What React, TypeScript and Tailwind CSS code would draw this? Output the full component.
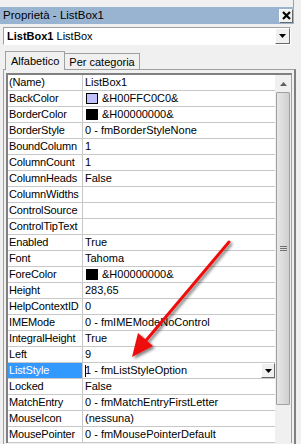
import React from 'react';

type Row = { name: string; value: string; swatch?: string };

const rows: Row[] = [
  { name: '(Name)', value: 'ListBox1' },
  { name: 'BackColor', value: '&H00FFC0C0&', swatch: '#c0c0ff' },
  { name: 'BorderColor', value: '&H00000000&', swatch: '#000000' },
  { name: 'BorderStyle', value: '0 - fmBorderStyleNone' },
  { name: 'BoundColumn', value: '1' },
  { name: 'ColumnCount', value: '1' },
  { name: 'ColumnHeads', value: 'False' },
  { name: 'ColumnWidths', value: '' },
  { name: 'ControlSource', value: '' },
  { name: 'ControlTipText', value: '' },
  { name: 'Enabled', value: 'True' },
  { name: 'Font', value: 'Tahoma' },
  { name: 'ForeColor', value: '&H00000000&', swatch: '#000000' },
  { name: 'Height', value: '283,65' },
  { name: 'HelpContextID', value: '0' },
  { name: 'IMEMode', value: '0 - fmIMEModeNoControl' },
  { name: 'IntegralHeight', value: 'True' },
  { name: 'Left', value: '9' },
  { name: 'ListStyle', value: '1 - fmListStyleOption' },
  { name: 'Locked', value: 'False' },
  { name: 'MatchEntry', value: '0 - fmMatchEntryFirstLetter' },
  { name: 'MouseIcon', value: '(nessuna)' },
  { name: 'MousePointer', value: '0 - fmMousePointerDefault' },
];

function DropButton({ className }: { className: string }) {
  return (
    <div className={`flex items-center justify-center bg-[#f0f0f0] border border-t-white border-l-white border-r-[#696969] border-b-[#696969] ${className}`}>
      <svg width="7" height="4" viewBox="0 0 7 4">
        <path d="M0 0h7L3.5 4z" fill="#000" />
      </svg>
    </div>
  );
}

function PropRow({ row }: { row: Row }) {
  const selected = row.name === 'ListStyle';
  return (
    <div className="flex h-[16px] border-b border-[#c8c8c8] bg-white">
      <div
        className={`w-[75px] shrink-0 border-r border-[#c8c8c8] pl-[1px] leading-[15px] tracking-[-0.15px] whitespace-nowrap overflow-hidden ${
          selected ? 'bg-[#3399ff] text-white' : ''
        }`}
      >
        {row.name}
      </div>
      <div className="flex-1 flex items-center pl-[2px] whitespace-nowrap overflow-hidden relative">
        {row.swatch && (
          <span className="w-[12px] h-[11px] border border-black mr-[4px] ml-[1px] shrink-0" style={{ backgroundColor: row.swatch }} />
        )}
        {selected && <span className="w-px h-[12px] bg-black -mr-[1px]" />}
        <span className="leading-[15px]">{row.value}</span>
        {selected && <DropButton className="absolute right-0 top-0 w-[14px] h-[15px]" />}
      </div>
    </div>
  );
}

export default function App() {
  return (
    <div
      className="w-[301px] h-[444px] bg-[#f0f0f0] relative overflow-hidden text-[11px] text-black"
      style={{ fontFamily: '"Liberation Sans", Arial, sans-serif' }}
    >
      <div className="h-[7px] border-r border-[#a0a0a0] w-[294px]" />

      <div className="flex h-[17px] items-center bg-[#99b4d1] mr-[7px] pl-[3px] pr-[1px]">
        <span className="flex-1 text-[11.5px]">Proprietà - ListBox1</span>
        <div className="w-[14px] h-[14px] bg-[#f0f0f0] border border-t-white border-l-white border-r-[#696969] border-b-[#696969] flex items-center justify-center">
          <svg width="9" height="9" viewBox="0 0 9 9">
            <path d="M1 1l7 7M8 1L1 8" stroke="#000" strokeWidth="2.2" />
          </svg>
        </div>
      </div>

      <div className="px-[3px] pt-[3px] mr-[7px]">
        <div className="h-[18px] flex bg-white border border-t-[#a0a0a0] border-l-[#a0a0a0] border-r-white border-b-white items-center pl-[3px]">
          <span className="flex-1 whitespace-nowrap">
            <b>ListBox1</b> ListBox
          </span>
          <DropButton className="w-[15px] h-[16px]" />
        </div>
      </div>

      <div className="flex pl-[5px] pt-[4px] h-[24px] items-end">
        <div className="h-[19px] px-[5px] border border-b-0 border-[#a0a0a0] bg-[#f0f0f0] leading-[18px] relative -mb-px z-10">
          Alfabetico
        </div>
        <div className="h-[16px] px-[4px] border border-l-0 border-b-0 border-[#a0a0a0] leading-[16px]">Per categoria</div>
      </div>

      <div className="mx-[3px] mr-[5px] border-l border-t border-[#a0a0a0] border-r-2 border-r-[#808080] pl-[2px] pt-[3px] pr-[2px] h-[400px]">
        <div className="flex border-t-2 border-l-2 border-[#808080] border-r border-r-[#a0a0a0]">
          <div className="flex-1">
            {rows.map((r) => (
              <PropRow key={r.name} row={r} />
            ))}
          </div>
          <div className="w-[16px] bg-[#f0f0f0] flex flex-col">
            <div className="h-[17px] flex items-center justify-center">
              <svg width="7" height="4" viewBox="0 0 7 4">
                <path d="M3.5 0L7 4H0z" fill="#606060" />
              </svg>
            </div>
            <div className="mx-[1px] h-[313px] rounded-[1px] border border-[#a0a0a0] bg-gradient-to-r from-[#e6e6e6] via-[#dcdcdc] to-[#cfcfcf] flex items-center justify-center">
              <svg width="7" height="6" viewBox="0 0 7 6">
                <path d="M0 .5h7M0 2.5h7M0 4.5h7" stroke="#707070" />
              </svg>
            </div>
          </div>
        </div>
      </div>

      <svg className="absolute left-0 top-0 pointer-events-none" width="301" height="444" viewBox="0 0 301 444">
        <defs>
          <filter id="sh" x="-20%" y="-20%" width="140%" height="140%">
            <feGaussianBlur in="SourceAlpha" stdDeviation="1.5" />
            <feOffset dx="2" dy="2" />
            <feComponentTransfer>
              <feFuncA type="linear" slope="0.5" />
            </feComponentTransfer>
            <feMerge>
              <feMergeNode />
              <feMergeNode in="SourceGraphic" />
            </feMerge>
          </filter>
        </defs>
        <g filter="url(#sh)">
          <line x1="229" y1="242" x2="143" y2="344" stroke="#ee1111" strokeWidth="3" strokeLinecap="round" />
          <path d="M132 357L138 333L153 346z" fill="#ee1111" />
        </g>
      </svg>
    </div>
  );
}
